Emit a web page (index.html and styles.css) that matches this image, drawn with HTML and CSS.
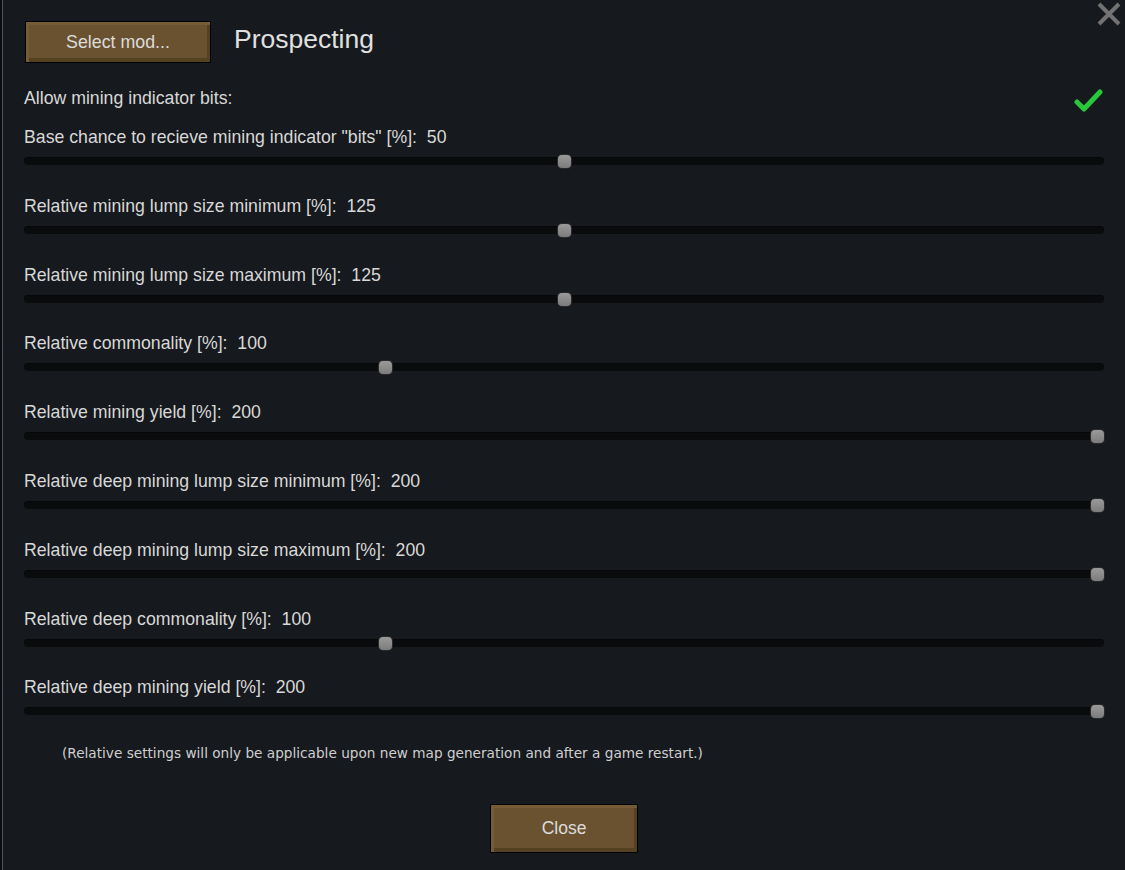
FILE: index.html
```html
<!DOCTYPE html>
<html>
<head>
<meta charset="utf-8">
<link rel="stylesheet" href="styles.css">
</head>
<body>
<div class="edge"></div>
<div class="window">
  <svg class="close-x" width="26" height="26" viewBox="0 0 26 26">
    <path d="M3 3 L23 23 M23 3 L3 23" stroke="#727272" stroke-width="4" stroke-linecap="butt"/>
  </svg>
  <div class="header">
    <button class="btn select-btn">Select mod...</button>
    <div class="title">Prospecting</div>
  </div>
  <div class="allow-row">
    <span class="label">Allow mining indicator bits:</span>
    <svg class="check" width="30" height="26" viewBox="0 0 30 26">
      <path d="M3 14 L10 21 L26 4" fill="none" stroke="#27c93a" stroke-width="5" stroke-linecap="round" stroke-linejoin="round"/>
    </svg>
  </div>
  <div class="rows">
    <div class="row">
      <div class="label">Base chance to recieve mining indicator "bits" [%]:  50</div>
      <div class="track"><div class="track-inner"><div class="handle" style="left:50%"></div></div></div>
    </div>
    <div class="row">
      <div class="label">Relative mining lump size minimum [%]:  125</div>
      <div class="track"><div class="track-inner"><div class="handle" style="left:50%"></div></div></div>
    </div>
    <div class="row">
      <div class="label">Relative mining lump size maximum [%]:  125</div>
      <div class="track"><div class="track-inner"><div class="handle" style="left:50%"></div></div></div>
    </div>
    <div class="row">
      <div class="label">Relative commonality [%]:  100</div>
      <div class="track"><div class="track-inner"><div class="handle" style="left:33.3%"></div></div></div>
    </div>
    <div class="row">
      <div class="label">Relative mining yield [%]:  200</div>
      <div class="track"><div class="track-inner"><div class="handle" style="left:100%"></div></div></div>
    </div>
    <div class="row">
      <div class="label">Relative deep mining lump size minimum [%]:  200</div>
      <div class="track"><div class="track-inner"><div class="handle" style="left:100%"></div></div></div>
    </div>
    <div class="row">
      <div class="label">Relative deep mining lump size maximum [%]:  200</div>
      <div class="track"><div class="track-inner"><div class="handle" style="left:100%"></div></div></div>
    </div>
    <div class="row">
      <div class="label">Relative deep commonality [%]:  100</div>
      <div class="track"><div class="track-inner"><div class="handle" style="left:33.3%"></div></div></div>
    </div>
    <div class="row">
      <div class="label">Relative deep mining yield [%]:  200</div>
      <div class="track"><div class="track-inner"><div class="handle" style="left:100%"></div></div></div>
    </div>
  </div>
  <div class="note">(Relative settings will only be applicable upon new map generation and after a game restart.)</div>
  <div class="footer">
    <button class="btn close-btn">Close</button>
  </div>
</div>
</body>
</html>
```

FILE: styles.css
```css
html, body {
  margin: 0;
  padding: 0;
  background: #16191d;
  width: 1125px;
  height: 870px;
  overflow: hidden;
}
body {
  display: flex;
  font-family: "Liberation Sans", Arial, sans-serif;
  color: #d9d9d9;
}
.edge {
  width: 2px;
  flex: none;
  background: #0c0d0f;
  border-right: 1px solid #4f565f;
}
.window {
  position: relative;
  flex: 1;
  display: flex;
  flex-direction: column;
  padding: 21px 21px 0 21px;
  background: #16191d;
}
.close-x {
  position: absolute;
  top: 1px;
  right: 3px;
}
.header {
  display: flex;
  align-items: center;
  height: 42px;
  gap: 23px;
}
.btn {
  font-family: "Liberation Sans", Arial, sans-serif;
  color: #dcdcdc;
  background: #6a5230;
  border: 1px solid #000;
  box-shadow: inset 3px 3px 0 #755c36, inset -3px -4px 0 #54411f;
  padding: 0;
  cursor: pointer;
}
.select-btn {
  width: 186px;
  height: 42px;
  font-size: 17.8px;
  margin-left: 1px;
}
.title {
  font-size: 26.5px;
  color: #e0e0e0;
  padding-bottom: 5px;
}
.label {
  font-size: 17.7px;
  line-height: 20px;
  white-space: pre;
  color: #d8d8d8;
}
.allow-row {
  display: flex;
  align-items: center;
  justify-content: space-between;
  height: 26px;
  margin-top: 23px;
}
.allow-row .label {
  margin-top: -2px;
}
.check {
  margin-top: 3px;
}
.rows {
  display: flex;
  flex-direction: column;
  gap: 30.8px;
  margin-top: 15px;
}
.row {
  display: flex;
  flex-direction: column;
}
.track {
  position: relative;
  margin-top: 10px;
  height: 8px;
  border-radius: 4px;
  background: #0a0b0d;
  box-shadow: inset 0 1px 0 #060708;
}
.track-inner {
  position: absolute;
  left: 0;
  right: 13px;
  top: 0;
  bottom: 0;
}
.handle {
  position: absolute;
  top: -2px;
  width: 13px;
  height: 13px;
  border-radius: 4px;
  background: linear-gradient(#9a9a9a, #7c7c7c);
  box-shadow: 0 0 0 1px #2a2a2a;
}
.note {
  font-family: "DejaVu Sans", sans-serif;
  font-size: 13.65px;
  color: #cfcfcf;
  margin-top: 30px;
  margin-left: 38px;
  line-height: 16px;
}
.footer {
  display: flex;
  justify-content: center;
  margin-top: 43px;
}
.close-btn {
  width: 148px;
  height: 49px;
  font-size: 17.5px;
}
```
